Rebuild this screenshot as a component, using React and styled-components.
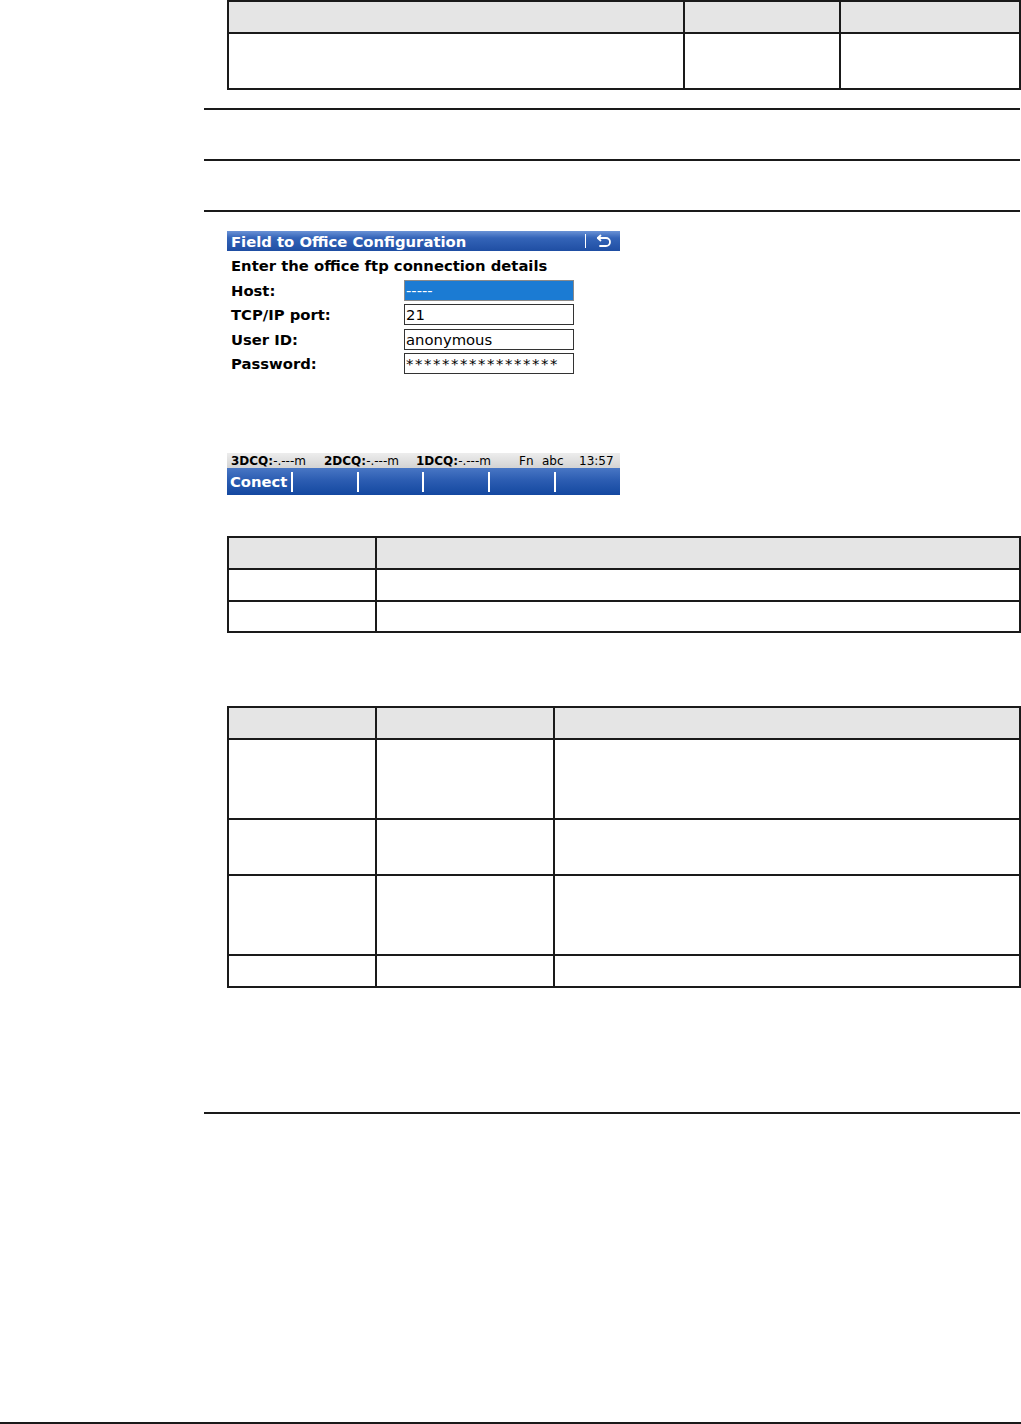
import React from 'react';
import styled, { createGlobalStyle } from 'styled-components';

const GlobalStyle = createGlobalStyle`
  html, body {
    margin: 0;
    padding: 0;
    background: #ffffff;
  }
  body {
    font-family: 'DejaVu Sans', 'Liberation Sans', sans-serif;
    color: #000;
  }
`;

const Page = styled.div`
  width: 1021px;
  height: 1424px;
  display: flex;
  flex-direction: column;
  overflow: hidden;
  background: #fff;
`;

const Main = styled.div`
  margin-left: 204px;
  width: 816px;
  display: flex;
  flex-direction: column;
`;

const Rule = styled.div`
  height: 2px;
  background: #1a1a1a;
  margin-top: ${(p) => p.$gap || 0}px;
`;

const FooterRule = styled.div`
  margin-top: auto;
  height: 2px;
  width: 100%;
  background: #1a1a1a;
`;

const Table = styled.div`
  margin-left: 23px;
  margin-top: ${(p) => p.$gap || 0}px;
  width: 794px;
  box-sizing: border-box;
  display: grid;
  grid-template-columns: ${(p) => p.$cols.map((c) => c + 'px').join(' ')};
  grid-template-rows: ${(p) => p.$rows.map((r) => r + 'px').join(' ')};
  border-top: 2px solid #1a1a1a;
  border-left: 2px solid #1a1a1a;
`;

const Cell = styled.div`
  box-sizing: border-box;
  border-right: 2px solid #1a1a1a;
  border-bottom: 2px solid #1a1a1a;
  background: ${(p) => (p.$head ? '#e5e5e5' : '#fff')};
`;

const Screen = styled.div`
  margin-left: 23px;
  margin-top: ${(p) => p.$gap || 0}px;
  width: 393px;
  display: flex;
  flex-direction: column;
  font-family: 'DejaVu Sans', 'Verdana', sans-serif;
`;

const TitleBar = styled.div`
  height: 20px;
  display: flex;
  align-items: center;
  padding-left: 4px;
  background: linear-gradient(#6a92d6 0%, #3464b8 35%, #1f4ea3 100%);
  color: #fff;
  font-weight: bold;
  font-size: 14.8px;
  white-space: nowrap;
`;

const TitleText = styled.span`
  flex: 1;
`;

const TitleSep = styled.span`
  width: 1px;
  height: 14px;
  background: #fff;
  margin-right: 10px;
`;

const BackIcon = styled.svg`
  width: 16px;
  height: 14px;
  margin-right: 8px;
`;

const Body = styled.div`
  height: 202px;
  box-sizing: border-box;
  padding: 3px 0 0 4px;
  background: #fff;
`;

const Heading = styled.div`
  height: 24px;
  line-height: 24px;
  font-weight: bold;
  font-size: 14.8px;
  white-space: nowrap;
`;

const FormRow = styled.div`
  height: 24.5px;
  display: grid;
  grid-template-columns: 173px 170px;
  align-items: center;
`;

const Label = styled.span`
  font-weight: bold;
  font-size: 14.8px;
  white-space: nowrap;
`;

const Field = styled.div`
  box-sizing: border-box;
  height: 21px;
  line-height: 20px;
  padding-left: 1px;
  font-size: 14.8px;
  white-space: nowrap;
  overflow: hidden;
  border: 1px solid ${(p) => (p.$active ? '#8a8a8a' : '#333')};
  background: ${(p) => (p.$active ? '#1b7bd3' : '#fff')};
  color: ${(p) => (p.$active ? '#fff' : '#000')};
  letter-spacing: ${(p) => (p.$masked ? '1.6px' : '0')};
`;

const StatusBar = styled.div`
  height: 15px;
  line-height: 16px;
  padding-left: 4px;
  display: grid;
  grid-template-columns: 93px 92px 103px 23px 37px auto;
  background: linear-gradient(#ededed, #d3d3d3);
  font-size: 12px;
  white-space: nowrap;
  overflow: hidden;
`;

const Bold = styled.b`
  font-weight: bold;
`;

const SoftKeys = styled.div`
  height: 27px;
  display: flex;
  background: linear-gradient(#4876c4 0%, #2c5db2 45%, #1448a0 100%);
`;

const Key = styled.div`
  flex: 1;
  padding-left: 3px;
  line-height: 28px;
  color: #fff;
  font-weight: bold;
  font-size: 14.8px;
  white-space: nowrap;
`;

const KeySep = styled.span`
  width: 2px;
  height: 20px;
  align-self: flex-end;
  margin-bottom: 3px;
  background: #fff;
`;

const softKeys = ['Conect', '', '', '', '', ''];

const App = () => {
  return (
    <>
      <GlobalStyle />
      <Page>
        <Main>
          <Table $cols={[456, 156, 180]} $rows={[32, 56]}>
            <Cell $head />
            <Cell $head />
            <Cell $head />
            <Cell />
            <Cell />
            <Cell />
          </Table>
          <Rule $gap={18} />
          <Rule $gap={49} />
          <Rule $gap={49} />

          <Screen $gap={19}>
            <TitleBar>
              <TitleText>Field to Office Configuration</TitleText>
              <TitleSep />
              <BackIcon viewBox="0 0 16 14" fill="none" stroke="#fff" strokeWidth="1.8" strokeLinecap="round" strokeLinejoin="round">
                <path d="M4.5 1.5 L1.8 4 L4.5 6.5" />
                <path d="M2 4 H10 a4 4 0 0 1 0 8 H4" />
              </BackIcon>
            </TitleBar>
            <Body>
              <Heading>Enter the office ftp connection details</Heading>
              <FormRow>
                <Label>Host:</Label>
                <Field $active>-----</Field>
              </FormRow>
              <FormRow>
                <Label>TCP/IP port:</Label>
                <Field>21</Field>
              </FormRow>
              <FormRow>
                <Label>User ID:</Label>
                <Field>anonymous</Field>
              </FormRow>
              <FormRow>
                <Label>Password:</Label>
                <Field $masked>*****************</Field>
              </FormRow>
            </Body>
            <StatusBar>
              <span><Bold>3DCQ:</Bold>-.---m</span>
              <span><Bold>2DCQ:</Bold>-.---m</span>
              <span><Bold>1DCQ:</Bold>-.---m</span>
              <span>Fn</span>
              <span>abc</span>
              <span>13:57</span>
            </StatusBar>
            <SoftKeys>
              {softKeys.map((k, i) => (
                <React.Fragment key={i}>
                  <Key>{k}</Key>
                  {i < softKeys.length - 1 && <KeySep />}
                </React.Fragment>
              ))}
            </SoftKeys>
          </Screen>

          <Table $gap={41} $cols={[148, 644]} $rows={[32, 32, 31]}>
            <Cell $head />
            <Cell $head />
            <Cell />
            <Cell />
            <Cell />
            <Cell />
          </Table>

          <Table $gap={73} $cols={[148, 178, 466]} $rows={[32, 80, 56, 80, 32]}>
            {Array.from({ length: 15 }).map((_, i) => (
              <Cell key={i} $head={i < 3} />
            ))}
          </Table>

          <Rule $gap={124} />
        </Main>
        <FooterRule />
      </Page>
    </>
  );
};

export default App;
